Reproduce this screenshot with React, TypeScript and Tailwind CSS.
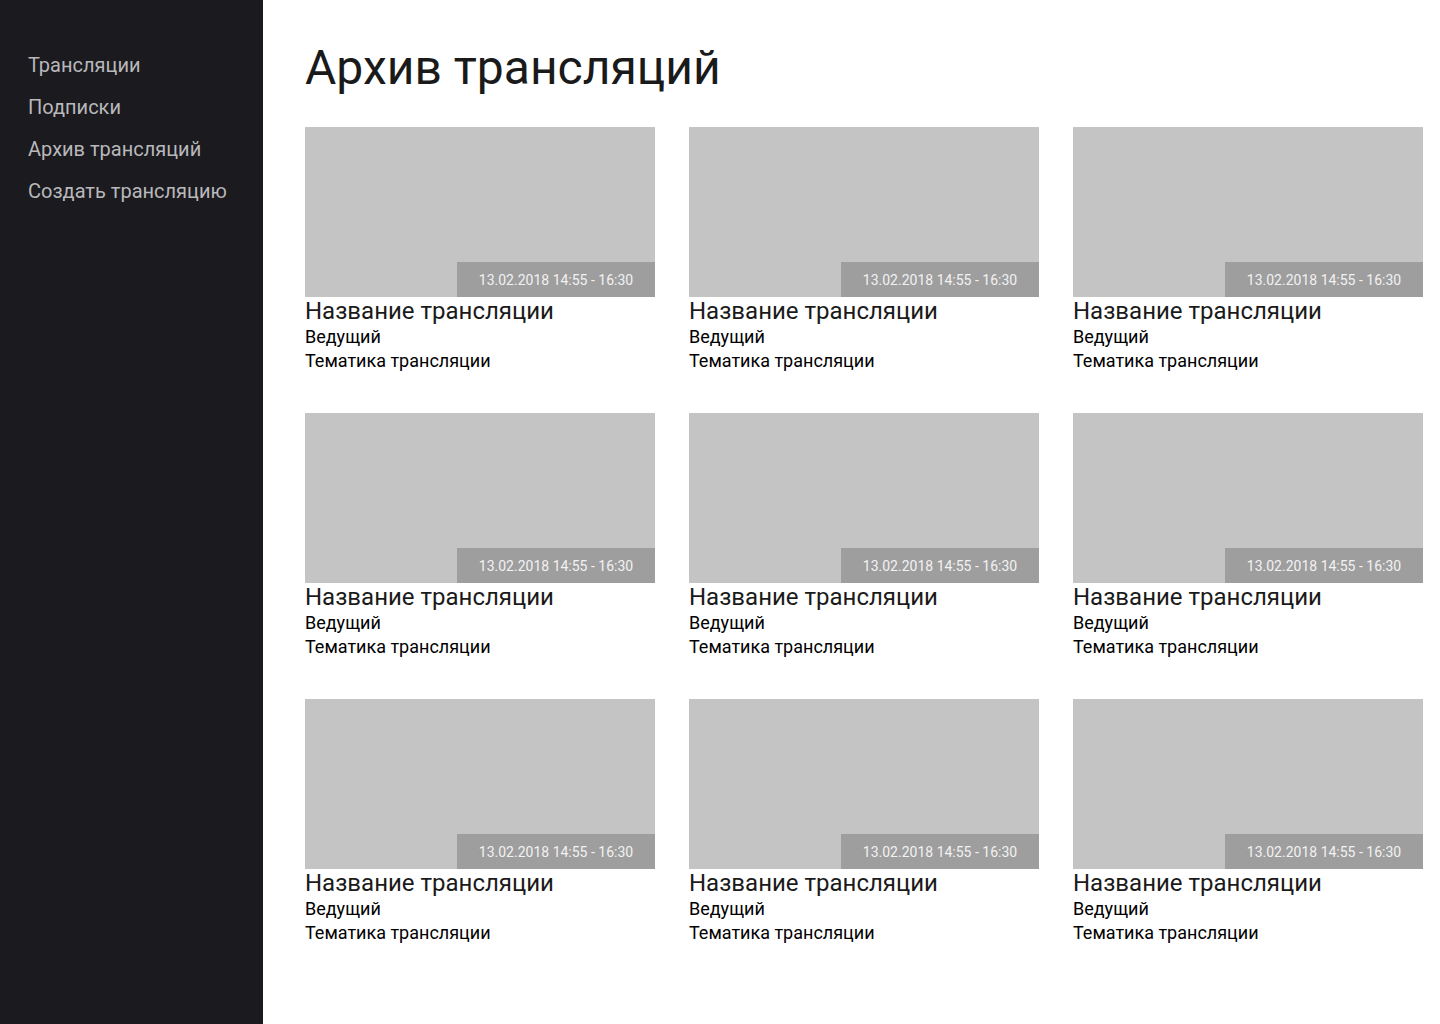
import React from 'react';

const menu = ['Трансляции', 'Подписки', 'Архив трансляций', 'Создать трансляцию'];

const cards = Array.from({ length: 9 }, (_, i) => ({
  id: i,
  date: '13.02.2018 14:55 - 16:30',
  title: 'Название трансляции',
  host: 'Ведущий',
  topic: 'Тематика трансляции',
}));

const Card = ({ date, title, host, topic }: { date: string; title: string; host: string; topic: string }) => (
  <div className="w-[350px]">
    <div className="relative h-[170px] bg-[#c4c4c4]">
      <div className="absolute right-0 bottom-0 flex h-[35px] w-[198px] items-center justify-center pt-[2px] text-[14px] bg-[#9e9e9e] text-[#f2f2f2]">
        {date}
      </div>
    </div>
    <div className="text-[24px] leading-[28px] text-[#1a1a1a]">{title}</div>
    <div className="text-[18px] leading-[24px] text-black">{host}</div>
    <div className="text-[18px] leading-[24px] text-black">{topic}</div>
  </div>
);

export default function App() {
  return (
    <div className="flex min-h-[1024px] w-full bg-white font-['Roboto',sans-serif]">
      <aside className="w-[263px] shrink-0 bg-[#1b1a1f] pt-[52px] pl-[28px]">
        <nav className="flex flex-col">
          {menu.map((item) => (
            <a key={item} href="#" className="h-[42px] text-[20px] leading-[26px] text-[#b8b8bb]">
              {item}
            </a>
          ))}
        </nav>
      </aside>
      <main className="flex-1 pl-[42px] pt-[40px]">
        <h1 className="mb-[31px] text-[48px] leading-[56px] text-[#1a1a1a]">Архив трансляций</h1>
        <div className="grid grid-cols-[350px_350px_350px] gap-x-[34px] gap-y-[40px]">
          {cards.map((c) => (
            <Card key={c.id} {...c} />
          ))}
        </div>
      </main>
    </div>
  );
}
